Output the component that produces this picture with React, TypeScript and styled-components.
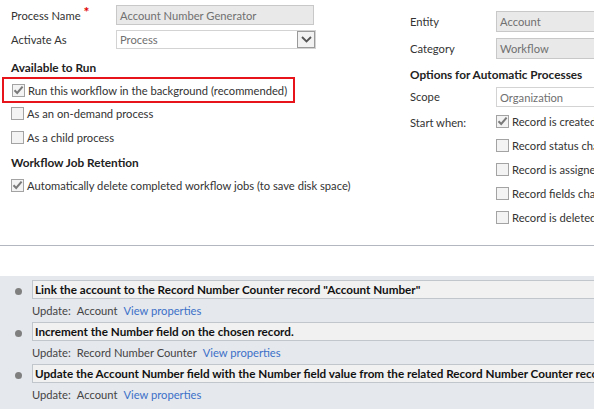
import React from "react";
import styled, { createGlobalStyle } from "styled-components";

const Global = createGlobalStyle`
  html, body { margin: 0; padding: 0; background: #ffffff; }
  body { width: 594px; height: 409px; overflow: hidden; font-family: Lato, "Open Sans", sans-serif; font-size: 11.2px; color: #333333; }
`;

const Page = styled.div`
  width: 594px;
  height: 409px;
  overflow: hidden;
  display: flex;
  flex-direction: column;
`;

const Top = styled.div`
  display: flex;
  height: 245px;
  border-bottom: 1px solid #b3b8c0;
`;

const LeftCol = styled.div`
  width: 410px;
  flex: none;
  padding: 5px 0 0 11px;
  box-sizing: border-box;
`;

const RightCol = styled.div`
  flex: none;
  width: 300px;
  padding-top: 11px;
`;

const FieldRow = styled.div<{ $h: number; $gap: number; $labelW: number; $mt?: number }>`
  display: flex;
  align-items: center;
  height: ${(p) => p.$h}px;
  margin-top: ${(p) => p.$mt ?? 0}px;
  margin-bottom: ${(p) => p.$gap}px;
  & > label { width: ${(p) => p.$labelW}px; flex: none; }
`;

const Label = styled.label`
  color: #333333;
  white-space: nowrap;
  line-height: 16px;
`;

const Req = styled.span`
  color: #e00000;
  font-size: 14px;
  font-weight: 700;
  margin-left: 3px;
  position: relative;
  top: -3px;
`;

const TextBox = styled.div<{ $w: number; $ro?: boolean }>`
  width: ${(p) => p.$w}px;
  height: 100%;
  box-sizing: border-box;
  border: 1px solid ${(p) => (p.$ro ? "#c8c8c8" : "#d3d3d3")};
  background: ${(p) => (p.$ro ? "#e9e9e9" : "#ffffff")};
  color: #707070;
  padding-left: 3px;
  display: flex;
  align-items: center;
  white-space: nowrap;
  overflow: hidden;
`;

const Select = styled.div`
  width: 200px;
  height: 100%;
  box-sizing: border-box;
  border: 1px solid #d3d3d3;
  background: #fff;
  color: #707070;
  padding-left: 3px;
  display: flex;
  align-items: center;
  justify-content: space-between;
`;

const DropBtn = styled.div`
  width: 18px;
  height: 17px;
  box-sizing: border-box;
  border: 1px solid #9a9a9a;
  background: #f2f2f2;
  display: flex;
  align-items: center;
  justify-content: center;
`;

const SectionTitle = styled.div<{ $mt: number }>`
  font-weight: 700;
  font-size: 11.8px;
  color: #222222;
  line-height: 16px;
  margin-top: ${(p) => p.$mt}px;
  white-space: nowrap;
`;

const Highlight = styled.div`
  margin: 1px 0 -2px -9px;
  width: fit-content;
  border: 2px solid #e8141c;
  padding: 0 6px 0 8px;
  height: 22px;
  display: flex;
  align-items: center;
`;

const CheckRow = styled.div<{ $mt?: number }>`
  display: flex;
  align-items: center;
  height: 24px;
  margin-top: ${(p) => p.$mt ?? 0}px;
  white-space: nowrap;
  color: #333333;
`;

const Box = styled.span`
  width: 13px;
  height: 13px;
  box-sizing: border-box;
  border: 1px solid #a3a3a3;
  background: #f3f3f3;
  flex: none;
  margin-right: 3px;
  display: flex;
  align-items: center;
  justify-content: center;
`;

const StartWhen = styled.div`
  display: flex;
  margin-top: 2px;
`;

const StartLabel = styled.div`
  width: 86px;
  flex: none;
  height: 24px;
  line-height: 24px;
  padding-top: 2px;
  box-sizing: border-box;
`;

const Steps = styled.div`
  margin-top: 30px;
  flex: 1;
  background: #e5e8ed;
  padding-top: 4px;
`;

const Step = styled.div`
  display: grid;
  grid-template-columns: 32px 1fr;
`;

const Bullet = styled.div`
  width: 7px;
  height: 7px;
  border-radius: 50%;
  background: #7f7f7f;
  margin: 8px 0 0 15px;
`;

const StepTitle = styled.div`
  height: 19px;
  box-sizing: border-box;
  border: 1px solid #c1c5cc;
  border-right: none;
  background: #f1f1f1;
  font-weight: 700;
  font-size: 11.7px;
  color: #111111;
  padding-left: 2px;
  line-height: 17px;
  white-space: nowrap;
  overflow: hidden;
`;

const StepDesc = styled.div`
  grid-column: 2;
  height: 23px;
  line-height: 23px;
  color: #444444;
  white-space: nowrap;
`;

const Gap = styled.span<{ $w: number }>`
  display: inline-block;
  width: ${(p) => p.$w}px;
`;

const Link = styled.a`
  color: #3c70c8;
  text-decoration: none;
`;

const Check = () => (
  <svg width="11" height="10" viewBox="0 0 11 10">
    <path d="M1.5 5.2 L4.2 8 L9.6 1.6" fill="none" stroke="#7a7a7a" strokeWidth="2" />
  </svg>
);

const Checkbox = ({ checked }: { checked?: boolean }) => <Box>{checked ? <Check /> : null}</Box>;

const Chevron = () => (
  <svg width="11" height="7" viewBox="0 0 11 7">
    <path d="M1 1 L5.5 5.5 L10 1" fill="none" stroke="#555" strokeWidth="1.8" />
  </svg>
);

const steps = [
  { title: 'Link the account to the Record Number Counter record "Account Number"', entity: "Account" },
  { title: "Increment the Number field on the chosen record.", entity: "Record Number Counter" },
  {
    title: "Update the Account Number field with the Number field value from the related Record Number Counter record",
    entity: "Account",
  },
];

export default function App() {
  return (
    <Page>
      <Global />
      <Top>
        <LeftCol>
          <FieldRow $h={20} $gap={5} $labelW={105}>
            <Label>
              Process Name<Req>*</Req>
            </Label>
            <TextBox $w={198} $ro>
              Account Number Generator
            </TextBox>
          </FieldRow>
          <FieldRow $h={19} $gap={0} $labelW={105}>
            <Label>Activate As</Label>
            <Select>
              Process
              <DropBtn>
                <Chevron />
              </DropBtn>
            </Select>
          </FieldRow>
          <SectionTitle $mt={11}>Available to Run</SectionTitle>
          <Highlight>
            <Checkbox checked />
            Run this workflow in the background (recommended)
          </Highlight>
          <CheckRow>
            <Checkbox />
            As an on-demand process
          </CheckRow>
          <CheckRow>
            <Checkbox />
            As a child process
          </CheckRow>
          <SectionTitle $mt={6}>Workflow Job Retention</SectionTitle>
          <CheckRow $mt={2}>
            <Checkbox checked />
            Automatically delete completed workflow jobs (to save disk space)
          </CheckRow>
        </LeftCol>
        <RightCol>
          <FieldRow $h={21} $gap={6} $labelW={86}>
            <Label>Entity</Label>
            <TextBox $w={120} $ro>
              Account
            </TextBox>
          </FieldRow>
          <FieldRow $h={21} $gap={0} $labelW={86}>
            <Label>Category</Label>
            <TextBox $w={120} $ro>
              Workflow
            </TextBox>
          </FieldRow>
          <SectionTitle $mt={8}>Options for Automatic Processes</SectionTitle>
          <FieldRow $h={20} $gap={0} $labelW={86} $mt={4}>
            <Label>Scope</Label>
            <TextBox $w={120}>Organization</TextBox>
          </FieldRow>
          <StartWhen>
            <StartLabel>Start when:</StartLabel>
            <div>
              <CheckRow>
                <Checkbox checked />
                Record is created
              </CheckRow>
              <CheckRow>
                <Checkbox />
                Record status changes
              </CheckRow>
              <CheckRow>
                <Checkbox />
                Record is assigned
              </CheckRow>
              <CheckRow>
                <Checkbox />
                Record fields change
              </CheckRow>
              <CheckRow>
                <Checkbox />
                Record is deleted
              </CheckRow>
            </div>
          </StartWhen>
        </RightCol>
      </Top>
      <Steps>
        {steps.map((s) => (
          <Step key={s.title}>
            <Bullet />
            <StepTitle>{s.title}</StepTitle>
            <StepDesc>
              Update:<Gap $w={6} />
              {s.entity}
              <Gap $w={6} />
              <Link href="#">View properties</Link>
            </StepDesc>
          </Step>
        ))}
      </Steps>
    </Page>
  );
}
